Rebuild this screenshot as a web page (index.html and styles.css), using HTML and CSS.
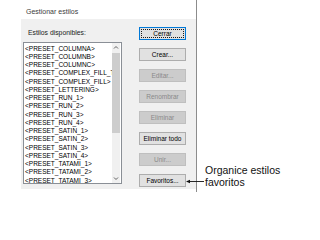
FILE: index.html
```html
<!DOCTYPE html>
<html lang="es">
<head>
<meta charset="utf-8">
<title>Gestionar estilos</title>
<link rel="stylesheet" href="styles.css">
</head>
<body>
<div class="page">
  <div class="frame">
    <div class="title">Gestionar estilos</div>
    <div class="panel">
      <div class="left">
        <div class="label">Estilos disponibles:</div>
        <div class="listbox">
          <ul class="items">
            <li>&lt;PRESET_COLUMNA&gt;</li>
            <li>&lt;PRESET_COLUMNB&gt;</li>
            <li>&lt;PRESET_COLUMNC&gt;</li>
            <li>&lt;PRESET_COMPLEX_FILL_T</li>
            <li>&lt;PRESET_COMPLEX_FILL&gt;</li>
            <li>&lt;PRESET_LETTERING&gt;</li>
            <li>&lt;PRESET_RUN_1&gt;</li>
            <li>&lt;PRESET_RUN_2&gt;</li>
            <li>&lt;PRESET_RUN_3&gt;</li>
            <li>&lt;PRESET_RUN_4&gt;</li>
            <li>&lt;PRESET_SATIN_1&gt;</li>
            <li>&lt;PRESET_SATIN_2&gt;</li>
            <li>&lt;PRESET_SATIN_3&gt;</li>
            <li>&lt;PRESET_SATIN_4&gt;</li>
            <li>&lt;PRESET_TATAMI_1&gt;</li>
            <li>&lt;PRESET_TATAMI_2&gt;</li>
            <li>&lt;PRESET_TATAMI_3&gt;</li>
          </ul>
          <div class="scrollbar">
            <svg class="arrow" width="8" height="8" viewBox="0 0 8 8"><path d="M2 5 L4 3 L6 5" fill="none" stroke="#606060" stroke-width="1"/></svg>
            <div class="track"><div class="thumb"></div></div>
            <svg class="arrow" width="8" height="8" viewBox="0 0 8 8"><path d="M2 3 L4 5 L6 3" fill="none" stroke="#606060" stroke-width="1"/></svg>
          </div>
        </div>
      </div>
      <div class="buttons">
        <div class="btn focus"><span>Cerrar</span></div>
        <div class="btn">Crear...</div>
        <div class="btn disabled">Editar...</div>
        <div class="btn disabled">Renombrar</div>
        <div class="btn disabled">Eliminar</div>
        <div class="btn">Eliminar todo</div>
        <div class="btn disabled">Unir...</div>
        <div class="btn fav">Favoritos...
          <div class="callout-arrow">
            <svg width="18" height="5" viewBox="0 0 18 5"><path d="M0 2.5 L4 0.8 L4 4.2 Z" fill="#111"/><path d="M3.5 2.5 H18" stroke="#111" stroke-width="0.9"/></svg>
          </div>
        </div>
      </div>
    </div>
  </div>
  <div class="note">Organice estilos<br>favoritos</div>
</div>
</body>
</html>
```

FILE: styles.css
```css
html, body {
  margin: 0;
  padding: 0;
  background: #ffffff;
}
body {
  width: 294px;
  height: 207px;
  overflow: hidden;
  font-family: "Liberation Sans", Arial, sans-serif;
}
.page {
  display: flex;
  align-items: flex-start;
}
.frame {
  width: 196px;
  height: 192px;
  border-right: 1px solid #8c8c8c;
  display: flex;
  flex-direction: column;
}
.title {
  height: 19px;
  box-sizing: border-box;
  padding: 7.5px 0 0 26px;
  font-size: 7px;
  line-height: 8px;
  color: #3c3c3c;
}
.panel {
  margin-left: 21px;
  height: 170px;
  background: #f0f0f0;
  display: flex;
  gap: 17px;
  padding: 0 0 0 2px;
}
.left {
  display: flex;
  flex-direction: column;
  width: 99px;
}
.label {
  margin-top: 9.5px;
  padding-left: 5px;
  font-size: 6.8px;
  line-height: 8px;
  height: 13.5px;
  color: #1a1a1a;
}
.listbox {
  height: 142px;
  border: 1px solid #8a8f96;
  background: #ffffff;
  display: flex;
  box-sizing: border-box;
}
.items {
  list-style: none;
  margin: 0;
  padding: 1.5px 0 0 1px;
  flex: 1;
  overflow: hidden;
  font-size: 6.5px;
  line-height: 8.25px;
  color: #000;
  white-space: nowrap;
}
.scrollbar {
  width: 8px;
  margin-right: 1px;
  background: #f0f0f0;
  display: flex;
  flex-direction: column;
}
.arrow {
  display: block;
  flex: none;
  height: 9px;
}
.track {
  flex: 1;
  padding-top: 1px;
}
.thumb {
  height: 80px;
  background: #cdcdcd;
}
.buttons {
  display: flex;
  flex-direction: column;
  gap: 8px;
  padding-top: 8px;
}
.btn {
  position: relative;
  width: 47px;
  height: 13px;
  box-sizing: border-box;
  border: 1px solid #adadad;
  background: #e1e1e1;
  font-size: 6.5px;
  line-height: 11px;
  text-align: center;
  color: #000;
  white-space: nowrap;
}
.btn.disabled {
  background: #cccccc;
  border-color: #bfbfbf;
  color: #8a8a8a;
}
.btn.focus {
  border-color: #0078d7;
  padding: 1px;
}
.btn.focus span {
  display: block;
  height: 9px;
  line-height: 9px;
  outline: 1px dotted #1a1a1a;
  outline-offset: -1px;
}
.callout-arrow {
  position: absolute;
  left: 46px;
  top: 4px;
  line-height: 0;
}
.note {
  margin: 164px 0 0 8px;
  font-size: 10.5px;
  line-height: 12px;
  color: #111;
}
```
